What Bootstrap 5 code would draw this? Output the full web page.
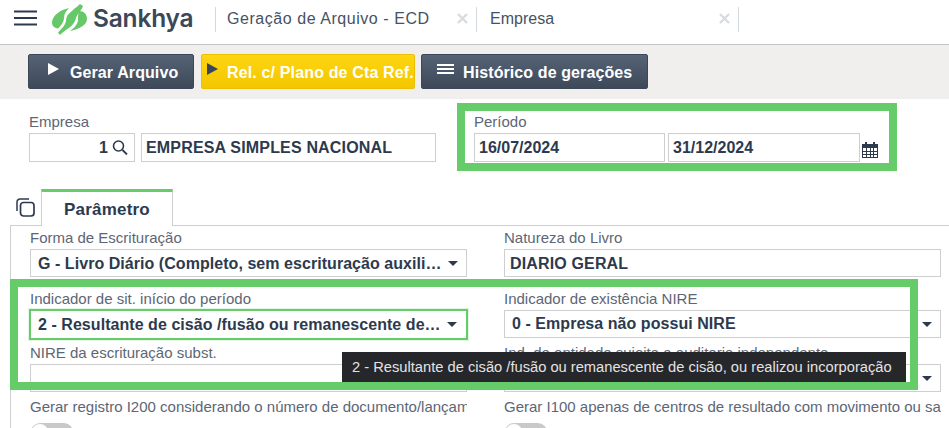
<!DOCTYPE html>
<html lang="pt-BR">
<head>
    <meta charset="UTF-8">
    <meta name="viewport" content="width=device-width, initial-scale=1.0">
    <title>Geração de Arquivo - ECD</title>
    <link href="https://cdn.jsdelivr.net/npm/bootstrap@5.3.0/dist/css/bootstrap.min.css" rel="stylesheet">
    <style>
        html, body {
            height: 428px;
            overflow: hidden;
        }
        body {
            position: relative;
            background-color: #fff;
            font-family: "Liberation Sans", Arial, sans-serif;
            color: #2d3a4e;
        }
        .app-header {
            height: 45px;
            padding-bottom: 5px;
            border-bottom: 1px solid #c6c6c6;
        }
        .burger {
            width: 23px;
            margin: 0 15px 3px 14px;
        }
        .logo-mark { flex: none; margin: 0 5px 1px 0; }
        .brand-name {
            font-family: Inter, sans-serif;
            font-weight: 600;
            font-size: 24.5px;
            letter-spacing: -0.2px;
            color: #3b4858;
            width: 122px;
            margin-bottom: 2px;
        }
        .app-tab {
            height: 25px;
            border-left: 1px solid #d3d8df;
            font-size: 16px;
            color: #465264;
            line-height: 25px;
        }
        .app-tab span { margin-bottom: 2px; }
        .tab-one { width: 261px; padding-left: 11px; letter-spacing: .55px; }
        .tab-two { width: 263px; padding-left: 13px; border-right: 1px solid #d3d8df; }
        .tab-x { width: 11px; height: 11px; margin: 0 8px 2px 0; flex: none; }
        .app-toolbar {
            height: 54px;
            padding: 9px 0 0 28px;
            background-color: #f0efee;
            gap: 7px;
        }
        .tool-btn {
            height: 35px;
            padding: 2px 0 0;
            border-radius: 2px;
            border: 1px solid #3c4757;
            background: linear-gradient(#566375, #3d4959);
            color: #fff;
            font-weight: 700;
            font-size: 16px;
            letter-spacing: .1px;
            white-space: nowrap;
        }
        .tool-btn:hover { color: #fff; }
        .tool-icon { flex: none; margin-bottom: 7px; margin-right: 7px; }
        .tool-dark-1 { width: 166px; padding-left: 18px; }
        .tool-yellow {
            width: 214px;
            padding-left: 4px;
            background: linear-gradient(#fed511, #f3c700);
            border-color: #eebf00;
            margin-right: -1px;
            letter-spacing: .15px;
        }
        .tool-yellow .tool-icon { margin-right: 5px; }
        .tool-dark-2 { width: 227px; padding-left: 15px; }
        .tool-dark-2 .tool-icon { margin-right: 9px; }
        .field-label {
            font-size: 15px;
            line-height: 16px;
            color: #5d6675;
            margin-bottom: 3px;
            white-space: nowrap;
        }
        .field-box {
            height: 28px;
            border: 1px solid #cfcfcf;
            border-radius: 0;
            padding: 0 0 0 7px;
            font-size: 16px;
            font-weight: 700;
            line-height: 26px;
            color: #2d3a4e;
            background: #fff;
            white-space: nowrap;
        }
        .head-form {
            padding: 15px 0 0 29px;
            height: 90px;
        }
        .head-form .field-box { height: 29px; line-height: 27px; padding-left: 4px; }
        .box-code { width: 106px; margin-right: 6px; padding-right: 6px !important; }
        .box-name { width: 295px; margin-right: 38px; letter-spacing: .17px; }
        .box-date-1 { width: 191px; margin-right: 3px; }
        .box-date-2 { width: 192px; margin-right: 2px; }
        .tab-strip {
            height: 36px;
            padding-left: 16px;
        }
        .copy-icon { width: 19px; height: 19px; margin: 9px 6px 0 0; flex: none; }
        .param-tab {
            width: 132px;
            height: 37px;
            border: 1px solid #cfcfcf;
            border-top: 3px solid #66cc6a;
            border-bottom: 0;
            background: #fff;
            font-weight: 700;
            font-size: 17px;
            letter-spacing: .2px;
            line-height: 35px;
            text-align: center;
            position: relative;
            z-index: 1;
        }
        .param-panel {
            margin-left: 10px;
            border-left: 1px solid #cfcfcf;
            border-top: 1px solid #cfcfcf;
            padding: 4px 8px 0 19px;
            display: grid;
            grid-template-columns: 437px 437px;
            grid-template-rows: 61px 54px 54px auto;
            column-gap: 37px;
        }
        .param-cell { min-width: 0; }
        .param-cell .field-box {
            display: flex;
            align-items: center;
            padding-right: 8px;
            letter-spacing: .05px;
        }
        .param-cell .box-low { padding-top: 1px; }
        .box-text {
            flex: 1;
            min-width: 0;
            overflow: hidden;
            text-overflow: ellipsis;
        }
        .param-cell .box-plain { padding-left: 5px; letter-spacing: .15px; }
        .caret-down {
            flex: none;
            width: 0;
            height: 0;
            margin-left: 4px;
            border-left: 5px solid transparent;
            border-right: 5px solid transparent;
            border-top: 5px solid #2d3a4e;
        }
        .param-cell .box-focus {
            border: 2px solid #66cc6a;
            height: 31px;
            width: calc(100% + 2px);
            padding-left: 7px;
            padding-right: 9px;
            margin: -1px -1px 0;
            box-shadow: 0 0 0 1px #e3f5e4;
        }
        .switch-off {
            width: 42px;
            height: 18px;
            border-radius: 9px;
            background: #c9c9c9;
            margin-top: 8px;
            margin-left: 1px;
            padding: 1px;
        }
        .switch-knob {
            width: 16px;
            height: 16px;
            border-radius: 50%;
            background: #fff;
        }
        .check-label { overflow: hidden; margin: 0; line-height: 16px; }
        .mark-frame {
            position: absolute;
            border: 8px solid #66cc6a;
            pointer-events: none;
        }
        .frame-period { left: 457px; top: 103px; width: 440px; height: 68px; }
        .frame-fields { left: 10px; top: 279px; width: 908px; height: 111px; }
        .hint-tip {
            position: absolute;
            left: 342px;
            top: 352px;
            width: 564px;
            height: 30px;
            background: #26272b;
            color: #e3e3e3;
            font-size: 14.7px;
            line-height: 30px;
            padding-left: 10px;
            white-space: nowrap;
        }
    </style>
</head>
<body>
    <header class="app-header d-flex align-items-center">
        <svg class="burger" height="16" viewBox="0 0 23 16"><path d="M0 1.500h23M0 8h23M0 14.500h23" stroke="#2d3a4e" stroke-width="2.200"/></svg>
        <svg width="36" height="32" viewBox="0 0 36 32" class="logo-mark">
            <path fill="#66c868" d="M17 5C8 7 1 12 0 19c0 4 2 6 6 6.500 4-3.500 6-7.500 6-10.500 0-4 2-7 5-10z"/>
            <path fill="#66c868" d="M28 1l3 2c-1 4-6 8-7 12-1 5-5 9-10 12-2 1.500-4 3-6 5l-2-2.500c3-3.500 7-6.500 8-11.500 0-6 4-8 8-12 2-1.500 4-3 6-5z"/>
            <path fill="#66c868" d="M27 8c5 0 8 3 8 8 0 6-8 10-17 12 4-3 7-6 8-10 0-4 0-7 1-10z"/>
        </svg>
        <div class="brand-name">Sankhya</div>
        <div class="app-tab tab-one d-flex align-items-center justify-content-between">
            <span>Geração de Arquivo - ECD</span>
            <svg class="tab-x" viewBox="0 0 11 11"><path d="M1 1l9 9M10 1l-9 9" stroke="#d8dbe0" stroke-width="2.400"/></svg>
        </div>
        <div class="app-tab tab-two d-flex align-items-center justify-content-between">
            <span>Empresa</span>
            <svg class="tab-x" viewBox="0 0 11 11"><path d="M1 1l9 9M10 1l-9 9" stroke="#d8dbe0" stroke-width="2.400"/></svg>
        </div>
    </header>

    <div class="app-toolbar d-flex">
        <button type="button" class="btn tool-btn tool-dark-1 d-flex align-items-center">
            <svg width="12" height="12" viewBox="0 0 12 12" class="tool-icon"><path d="M1 0l11 6-11 6z" fill="#fff"/></svg>
            <span class="ms-1">Gerar Arquivo</span>
        </button>
        <button type="button" class="btn tool-btn tool-yellow d-flex align-items-center">
            <svg width="12" height="12" viewBox="0 0 12 12" class="tool-icon"><path d="M1 0l11 6-11 6z" fill="#3a4658"/></svg>
            <span class="ms-1">Rel. c/ Plano de Cta Ref.</span>
        </button>
        <button type="button" class="btn tool-btn tool-dark-2 d-flex align-items-center">
            <svg width="17" height="10" viewBox="0 0 17 10" class="tool-icon"><path d="M0 1h17M0 5h17M0 9h17" stroke="#fff" stroke-width="1.800"/></svg>
            <span>Histórico de gerações</span>
        </button>
    </div>

    <form class="head-form d-flex">
        <div>
            <div class="field-label">Empresa</div>
            <div class="d-flex">
                <div class="form-control field-box box-code d-flex align-items-center justify-content-end">
                    <span>1</span>
                    <svg width="16" height="15" viewBox="0 0 16 15" class="ms-1"><circle cx="6.500" cy="6" r="5" fill="none" stroke="#2d3a4e" stroke-width="1.600"/><path d="M10.500 10l4.500 4.500" stroke="#2d3a4e" stroke-width="1.800"/></svg>
                </div>
                <div class="form-control field-box box-name">EMPRESA SIMPLES NACIONAL</div>
            </div>
        </div>
        <div>
            <div class="field-label">Período</div>
            <div class="d-flex align-items-center">
                <div class="form-control field-box box-date-1">16/07/2024</div>
                <div class="form-control field-box box-date-2">31/12/2024</div>
                <svg width="16" height="16" viewBox="0 0 16 16" class="mt-1">
                    <path fill="#2d3a4e" d="M0 2h3V0h2v2h6V0h2v2h3v14H0zM1 6v3h3V6zm4 0v3h3V6zm4 0v3h2V6zm3 0v3h3V6zM1 10v2h3v-2zm4 0v2h3v-2zm4 0v2h2v-2zm3 0v2h3v-2zM1 13v2h3v-2zm4 0v2h3v-2zm4 0v2h2v-2zm3 0v2h3v-2z"/>
                </svg>
            </div>
        </div>
    </form>

    <div class="tab-strip d-flex">
        <svg class="copy-icon" viewBox="0 0 19 19"><path d="M1 13V4a3 3 0 0 1 3-3h9" fill="none" stroke="#2d3a4e" stroke-width="1.500"/><rect x="4.500" y="4.500" width="13.500" height="13.500" rx="3" fill="none" stroke="#2d3a4e" stroke-width="1.700"/></svg>
        <div class="param-tab">Parâmetro</div>
    </div>

    <section class="param-panel">
        <div class="param-cell">
            <div class="field-label">Forma de Escrituração</div>
            <div class="form-control field-box box-low"><span class="box-text">G - Livro Diário (Completo, sem escrituração auxiliar)</span><span class="caret-down"></span></div>
        </div>
        <div class="param-cell">
            <div class="field-label">Natureza do Livro</div>
            <div class="form-control field-box box-plain box-low"><span class="box-text">DIARIO GERAL</span></div>
        </div>
        <div class="param-cell">
            <div class="field-label">Indicador de sit. início do período</div>
            <div class="form-control field-box box-focus"><span class="box-text">2 - Resultante de cisão /fusão ou remanescente de cisão, ou realizou incorporação</span><span class="caret-down"></span></div>
        </div>
        <div class="param-cell">
            <div class="field-label">Indicador de existência NIRE</div>
            <div class="form-control field-box"><span class="box-text">0 - Empresa não possui NIRE</span><span class="caret-down"></span></div>
        </div>
        <div class="param-cell">
            <div class="field-label">NIRE da escrituração subst.</div>
            <div class="form-control field-box"></div>
        </div>
        <div class="param-cell">
            <div class="field-label">Ind. de entidade sujeita a auditoria independente</div>
            <div class="form-control field-box"><span class="box-text"></span><span class="caret-down"></span></div>
        </div>
        <div class="param-cell">
            <div class="field-label check-label">Gerar registro I200 considerando o número de documento/lançamento</div>
            <div class="switch-off"><div class="switch-knob"></div></div>
        </div>
        <div class="param-cell">
            <div class="field-label check-label">Gerar I100 apenas de centros de resultado com movimento ou saldo</div>
            <div class="switch-off"><div class="switch-knob"></div></div>
        </div>
    </section>

    <div class="mark-frame frame-period"></div>
    <div class="mark-frame frame-fields"></div>
    <div class="hint-tip">2 - Resultante de cisão /fusão ou remanescente de cisão, ou realizou incorporação</div>

    <script src="https://cdn.jsdelivr.net/npm/bootstrap@5.3.0/dist/js/bootstrap.bundle.min.js"></script>
</body>
</html>
